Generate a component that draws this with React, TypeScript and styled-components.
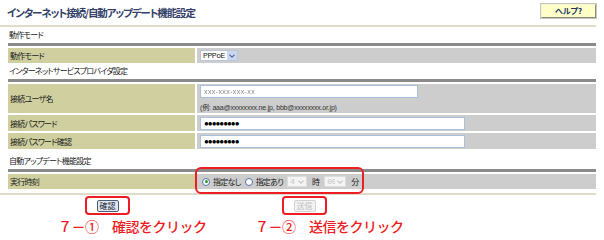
import styled, { createGlobalStyle, css } from "styled-components";

const GlobalStyle = createGlobalStyle`
  html, body {
    margin: 0;
    padding: 0;
    background: #ffffff;
  }
  body {
    font-family: "Noto Sans CJK JP", "Noto Sans", sans-serif;
    overflow: hidden;
  }
`;

// the small Japanese text used in labels and controls
const smallText = css`
  font-size: 8px;
  letter-spacing: -0.75px;
`;

const Page = styled.div`
  width: 604px;
  height: 240px;
  color: #222;
  font-feature-settings: "palt";
`;

const Header = styled.header`
  display: flex;
  justify-content: space-between;
  align-items: flex-start;
  height: 25px;
  padding: 0 8px 0 7px;
  box-sizing: border-box;
`;

const Title = styled.h1`
  margin: 6px 0 0;
  font-size: 10.5px;
  line-height: 14px;
  letter-spacing: -1.1px;
  font-weight: bold;
  color: #34426a;
`;

const HelpButton = styled.button`
  margin-top: 4px;
  width: 55px;
  height: 14px;
  padding: 0;
  background: #ffffc8;
  border: 1px solid;
  border-color: #f4f4e0 #8a8a80 #8a8a80 #f4f4e0;
  box-shadow: 0 0 0 1px #c8c8b8;
  font: bold 8px/12px "Noto Sans CJK JP", sans-serif;
  font-feature-settings: "palt";
  color: #223366;
`;

const Rule = styled.div`
  width: 596px;
  height: 2px;
  background: #dedbc9;
`;

const Section = styled.section<{ $gap?: number }>`
  padding: 0 8px;
  margin-top: ${(p) => p.$gap ?? 0}px;
`;

const SectionTitle = styled.div<{ $h?: number }>`
  display: flex;
  align-items: flex-end;
  height: ${(p) => p.$h ?? 16}px;
  padding: 0 0 3px 1px;
  box-sizing: border-box;
  line-height: 10px;
  ${smallText}
`;

const FormTable = styled.div`
  display: grid;
  grid-template-columns: 187px 1fr;
  gap: 2px;
  padding-top: 2px;
  border-top: 3px solid #8b8b8b;
`;

const LabelCell = styled.div<{ $h?: number }>`
  display: flex;
  align-items: center;
  height: ${(p) => p.$h ?? 15}px;
  padding-left: 2px;
  background: #cfcf9f;
  ${smallText}
`;

const ValueCell = styled.div`
  display: flex;
  flex-direction: column;
  justify-content: center;
  padding-left: 3px;
  background: #cdcdcd;
`;

const TextBox = styled.div<{ $w: number }>`
  display: flex;
  align-items: center;
  width: ${(p) => p.$w}px;
  height: 13px;
  padding-left: 3px;
  box-sizing: border-box;
  background: #fff;
  border: 1px solid #a9c1dc;
`;

const Blurred = styled.span`
  color: #8a8a8a;
  filter: blur(0.7px);
  font-family: "Liberation Sans", sans-serif;
  font-size: 7px;
  letter-spacing: 0.4px;
`;

const Dots = styled.span`
  font-family: "Liberation Sans", sans-serif;
  font-size: 8px;
  letter-spacing: -1px;
  color: #000;
`;

const Hint = styled.div`
  margin-top: 4px;
  font-family: "Liberation Sans", "Noto Sans CJK JP", sans-serif;
  font-size: 7px;
  color: #333;
  letter-spacing: -0.2px;
`;

const FakeSelect = styled.div<{ $w: number; $disabled?: boolean }>`
  display: flex;
  align-items: stretch;
  width: ${(p) => p.$w}px;
  height: 11px;
  box-sizing: border-box;
  border: 1px solid ${(p) => (p.$disabled ? "#dcdcdc" : "#b8c6d8")};
  background: ${(p) => (p.$disabled ? "#f4f4f4" : "#ffffff")};
  color: ${(p) => (p.$disabled ? "#c4c4c4" : "#222")};
  font-family: "Liberation Mono", monospace;
  font-size: 8px;
  line-height: 9px;
`;

const SelectText = styled.span`
  flex: 1;
  padding-left: 2px;
  overflow: hidden;
  white-space: nowrap;
  letter-spacing: -0.4px;
`;

const SelectArrow = styled.span<{ $disabled?: boolean }>`
  display: flex;
  align-items: center;
  justify-content: center;
  width: 10px;
  flex-shrink: 0;
  background: ${(p) => (p.$disabled ? "#f4f4f4" : "#c9d8f0")};
`;

const Chevron = ({ color }: { color: string }) => (
  <svg width="6" height="4" viewBox="0 0 6 4">
    <path d="M0.5 0.8 L3 3.2 L5.5 0.8" fill="none" stroke={color} strokeWidth="1.2" />
  </svg>
);

const ControlRow = styled.div`
  position: relative;
  display: flex;
  align-items: center;
  gap: 4px;
  height: 15px;
  padding-left: 2px;
  ${smallText}
  &::after {
    content: "";
    position: absolute;
    top: -7px;
    bottom: -5px;
    left: -5px;
    width: 165px;
    border: 2px solid #ee1d23;
    border-radius: 6px;
  }
`;

const RadioLabel = styled.label`
  display: flex;
  align-items: center;
  gap: 3px;
`;

const RadioDot = styled.span<{ $on?: boolean }>`
  position: relative;
  width: 8px;
  height: 8px;
  box-sizing: border-box;
  border-radius: 50%;
  border: 1px solid #4f74ab;
  background: #fff;
  &::after {
    content: "";
    display: ${(p) => (p.$on ? "block" : "none")};
    position: absolute;
    top: 1.5px;
    left: 1.5px;
    width: 3px;
    height: 3px;
    border-radius: 50%;
    background: #2f9a2f;
  }
`;

const Unit = styled.span`
  margin: 0 1px;
`;

const Steps = styled.div`
  display: grid;
  grid-template-columns: 197px 197px;
  padding-left: 58px;
  margin-top: 1px;
`;

const Step = styled.div`
  display: flex;
  flex-direction: column;
  align-items: flex-start;
`;

const Marker = styled.div`
  display: flex;
  align-items: center;
  justify-content: center;
  width: 45px;
  height: 19px;
  margin-left: 27px;
  box-sizing: border-box;
  border: 2px solid #ee1d23;
  border-radius: 4px;
`;

const SmallButton = styled.button<{ $disabled?: boolean }>`
  height: 12px;
  padding: 0 2px;
  font: 8px/10px "Noto Sans CJK JP", sans-serif;
  background: ${(p) => (p.$disabled ? "#f2f2f2" : "#dfe6ef")};
  color: ${(p) => (p.$disabled ? "#c0c0c0" : "#223")};
  border: 1px solid ${(p) => (p.$disabled ? "#d2d2d2" : "#4d5d78")};
  border-radius: 2px;
`;

const Caption = styled.div`
  margin-top: 2px;
  font-size: 14px;
  line-height: 18px;
  color: #ee1d23;
  font-weight: 500;
  white-space: nowrap;
  letter-spacing: -0.5px;
  font-feature-settings: normal;
`;

export default function App() {
  return (
    <Page>
      <GlobalStyle />
      <Header>
        <Title>インターネット接続/自動アップデート機能設定</Title>
        <HelpButton>ヘルプ?</HelpButton>
      </Header>
      <Rule />

      <Section>
        <SectionTitle>動作モード</SectionTitle>
        <FormTable>
          <LabelCell>動作モード</LabelCell>
          <ValueCell>
            <FakeSelect $w={38}>
              <SelectText>PPPoE</SelectText>
              <SelectArrow>
                <Chevron color="#5a6f99" />
              </SelectArrow>
            </FakeSelect>
          </ValueCell>
        </FormTable>
      </Section>

      <Section>
        <SectionTitle>インターネットサービスプロバイダ設定</SectionTitle>
        <FormTable>
          <LabelCell $h={29}>接続ユーザ名</LabelCell>
          <ValueCell>
            <TextBox $w={218}>
              <Blurred>xxx-xxx-xxx-xx</Blurred>
            </TextBox>
            <Hint>(例: aaa@xxxxxxxx.ne.jp, bbb@xxxxxxxx.or.jp)</Hint>
          </ValueCell>
          <LabelCell $h={16}>接続パスワード</LabelCell>
          <ValueCell>
            <TextBox $w={265}>
              <Dots>●●●●●●●●●</Dots>
            </TextBox>
          </ValueCell>
          <LabelCell $h={16}>接続パスワード確認</LabelCell>
          <ValueCell>
            <TextBox $w={265}>
              <Dots>●●●●●●●●●</Dots>
            </TextBox>
          </ValueCell>
        </FormTable>
      </Section>

      <Section>
        <SectionTitle $h={20}>自動アップデート機能設定</SectionTitle>
        <FormTable>
          <LabelCell>実行時刻</LabelCell>
          <ValueCell>
            <ControlRow>
              <RadioLabel>
                <RadioDot $on />
                指定なし
              </RadioLabel>
              <RadioLabel>
                <RadioDot />
                指定あり
              </RadioLabel>
              <FakeSelect $w={20} $disabled>
                <SelectText>4</SelectText>
                <SelectArrow $disabled>
                  <Chevron color="#c8c8c8" />
                </SelectArrow>
              </FakeSelect>
              <Unit>時</Unit>
              <FakeSelect $w={22} $disabled>
                <SelectText>00</SelectText>
                <SelectArrow $disabled>
                  <Chevron color="#c8c8c8" />
                </SelectArrow>
              </FakeSelect>
              <Unit>分</Unit>
            </ControlRow>
          </ValueCell>
        </FormTable>
      </Section>

      <Section $gap={4} style={{ padding: 0 }}>
        <Rule />
      </Section>

      <Steps>
        <Step>
          <Marker>
            <SmallButton>確認</SmallButton>
          </Marker>
          <Caption>７－①　確認をクリック</Caption>
        </Step>
        <Step>
          <Marker>
            <SmallButton $disabled>送信</SmallButton>
          </Marker>
          <Caption>７－②　送信をクリック</Caption>
        </Step>
      </Steps>
    </Page>
  );
}
